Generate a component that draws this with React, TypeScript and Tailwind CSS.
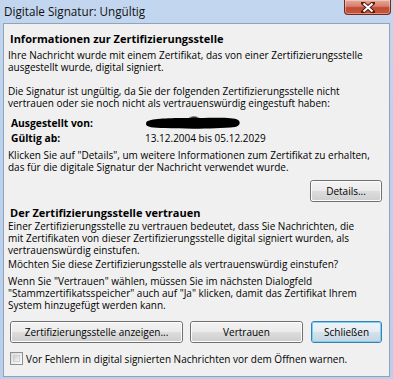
const font = { fontFamily: '"Open Sans", "Noto Sans", sans-serif' };

function WinButton({ label, className, focused }: { label: string; className: string; focused?: boolean }) {
  return (
    <button
      className={`relative h-[22px] rounded-[3px] border text-[10px] leading-none text-black ${
        focused ? "border-[#3c7fb1]" : "border-[#707070]"
      } ${className}`}
    >
      <span
        className={`absolute inset-0 rounded-[2px] border ${
          focused
            ? "border-[#73d2f7] bg-[linear-gradient(#eef3f6_0%,#e6edf2_50%,#d6e1e9_50%,#c9d6e0_100%)]"
            : "border-[#fcfcfc] bg-[linear-gradient(#f2f2f2_0%,#ebebeb_50%,#dddddd_50%,#cfcfcf_100%)]"
        }`}
      />
      <span className="relative">{label}</span>
    </button>
  );
}

export default function App() {
  return (
    <div
      className="flex h-[379px] w-[393px] flex-col overflow-hidden bg-[linear-gradient(#c2d6ef,#bcd1ec_40%,#b9cfea)] text-black"
      style={font}
    >
      {/* title bar */}
      <div className="flex h-[23px] shrink-0 items-start justify-between">
        <div className="pl-[4px] pt-[4px] text-[11.7px] leading-[14px] text-[#111]">Digitale Signatur: Ungültig</div>
        <div className="mr-[2px] flex h-[15px] w-[47px] items-center justify-center rounded-b-[4px] border border-t-0 border-[#6d2a1e] bg-[linear-gradient(#e9a99b_0%,#d47f6d_45%,#c24a33_55%,#c8583c_100%)] shadow-[inset_0_0_0_1px_rgba(255,255,255,0.35)]">
          <svg width="14" height="11" viewBox="0 0 14 11">
            <path d="M2 1 L12 10 M12 1 L2 10" stroke="#5a1a10" strokeWidth="4" strokeLinecap="square" />
            <path d="M2.5 1.5 L11.5 9.5 M11.5 1.5 L2.5 9.5" stroke="#ffffff" strokeWidth="2" />
          </svg>
        </div>
      </div>

      {/* client panel */}
      <div className="mx-[3px] flex h-[354px] flex-col border border-[#8fa3bd] bg-[#f0f0f0] pl-[4px] pr-[7px] pt-[9px] text-[10px] leading-[12px]">
        <div className="ml-[2px] text-[11px] font-bold leading-[12px]">Informationen zur Zertifizierungsstelle</div>
        <p className="mt-[4px]">
          Ihre Nachricht wurde mit einem Zertifikat, das von einer Zertifizierungsstelle
          <br />
          ausgestellt wurde, digital signiert.
        </p>
        <p className="mt-[12px]">
          Die Signatur ist ungültig, da Sie der folgenden Zertifizierungsstelle nicht
          <br />
          vertrauen oder sie noch nicht als vertrauenswürdig eingestuft haben:
        </p>
        <div className="mt-[8px] grid grid-cols-[134px_1fr] gap-y-[3px] pl-[3px]">
          <span className="text-[10.3px] font-bold">Ausgestellt von:</span>
          <span>
            <svg width="96" height="13" viewBox="0 0 96 13" className="-mt-[1px]">
              <path
                d="M3 5 C10 2 30 2 44 2 C46 0 52 0 54 2 C70 2 88 1 93 4 C96 6 95 10 90 11 C70 13 40 13 20 12 C8 12 1 11 1 8 C1 6 2 5 3 5 Z"
                fill="#000"
              />
              <path d="M45 1.5 C47 0.5 51 0.5 53 1.5" stroke="#9a9a9a" strokeWidth="1" fill="none" />
            </svg>
          </span>
          <span className="text-[10.3px] font-bold">Gültig ab:</span>
          <span>13.12.2004 bis 05.12.2029</span>
        </div>
        <p className="mt-[5px]">
          Klicken Sie auf "Details", um weitere Informationen zum Zertifikat zu erhalten,
          <br />
          das für die digitale Signatur der Nachricht verwendet wurde.
        </p>
        <div className="mt-[7px] flex justify-end">
          <WinButton label="Details..." className="w-[72px]" />
        </div>
        <div className="ml-[2px] mt-[5px] text-[11px] font-bold leading-[12px]">Der Zertifizierungsstelle vertrauen</div>
        <p className="mt-[1px]">
          Einer Zertifizierungsstelle zu vertrauen bedeutet, dass Sie Nachrichten, die
          <br />
          mit Zertifikaten von dieser Zertifizierungsstelle digital signiert wurden, als
          <br />
          vertrauenswürdig einstufen.
        </p>
        <p className="mt-[2px]">Möchten Sie diese Zertifizierungsstelle als vertrauenswürdig einstufen?</p>
        <p className="mt-[5px]">
          Wenn Sie "Vertrauen" wählen, müssen Sie im nächsten Dialogfeld
          <br />
          "Stammzertifikatsspeicher" auch auf "Ja" klicken, damit das Zertifikat Ihrem
          <br />
          System hinzugefügt werden kann.
        </p>
        <div className="mt-[10px] flex gap-[7px] pl-[2px]">
          <WinButton label="Zertifizierungsstelle anzeigen..." className="w-[173px]" />
          <WinButton label="Vertrauen" className="w-[113px]" />
          <WinButton label="Schließen" className="ml-[1px] w-[71px]" focused />
        </div>
        <label className="mt-[9px] flex items-center gap-[3px] pl-[2px]">
          <span className="h-[13px] w-[13px] border border-[#8e8f8f] bg-[linear-gradient(135deg,#dcdcdc,#fbfbfb)] p-[2px]">
            <span className="block h-full w-full border border-[#d0d0d0] bg-[linear-gradient(135deg,#cbcfd5,#f6f6f6)]" />
          </span>
          <span>Vor Fehlern in digital signierten Nachrichten vor dem Öffnen warnen.</span>
        </label>
      </div>
    </div>
  );
}
